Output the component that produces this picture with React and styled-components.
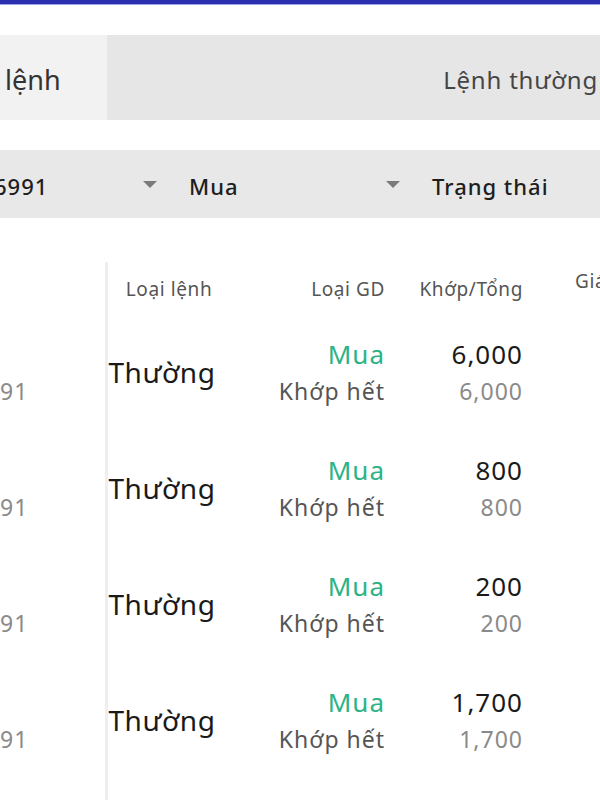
import React from 'react'
import styled, { createGlobalStyle } from 'styled-components'

const Global = createGlobalStyle`
  body {
    margin: 0;
    width: 600px;
    height: 800px;
    overflow: hidden;
    background: #fff;
    font-family: "Noto Sans", "DejaVu Sans", sans-serif;
  }
`

const Page = styled.div`
  width: 600px;
  height: 800px;
  overflow: hidden;
`

const TopBar = styled.div`
  height: 4px;
  background: #2b2fae;
  border-bottom: 1px solid #9aa6ea;
`

const Tabs = styled.div`
  display: flex;
  height: 85px;
  margin-top: 30px;
`

const Tab = styled.div`
  display: flex;
  align-items: center;
  overflow: hidden;
  white-space: nowrap;
  background: ${p => (p.$active ? '#f2f2f2' : '#e6e6e6')};
  width: ${p => (p.$active ? '107px' : 'auto')};
  flex: ${p => (p.$active ? 'none' : '1')};
  justify-content: ${p => (p.$active ? 'flex-start' : 'flex-end')};
  padding: 3px 0 0 ${p => (p.$active ? '5px' : '0')};
  box-sizing: border-box;
  font-size: ${p => (p.$active ? '27px' : '24px')};
  letter-spacing: ${p => (p.$active ? '0' : '0.8px')};
  color: ${p => (p.$active ? '#333' : '#454545')};
`

const TabLabel = styled.span`
  margin-right: ${p => p.$shift || '0'};
`

const Filters = styled.div`
  display: grid;
  grid-template-columns: 170px 240px 1fr;
  height: 68px;
  margin-top: 30px;
  background: #e8e8e8;
  overflow: hidden;
`

const Select = styled.div`
  display: flex;
  align-items: center;
  justify-content: space-between;
  padding: 4px ${p => p.$right || '0'} 0 ${p => p.$left || '0'};
  font-size: 22px;
  font-weight: 500;
  letter-spacing: 1px;
  color: #1e1e1e;
  white-space: nowrap;
`

const SelectText = styled.span`
  margin-left: ${p => p.$shift || '0'};
`

const Caret = styled.span`
  width: 0;
  height: 0;
  border-left: 7px solid transparent;
  border-right: 7px solid transparent;
  border-top: 7px solid #7a7a7a;
  margin-top: -4px;
`

const Table = styled.div`
  display: grid;
  grid-template-columns: 105px 125px 155px 138px 1fr;
  margin-top: 44px;
`

const Head = styled.div`
  height: 53px;
  display: flex;
  align-items: center;
  font-size: 19px;
  letter-spacing: 0.6px;
  color: #555;
  white-space: nowrap;
  justify-content: ${p => p.$align || 'flex-start'};
  padding-left: ${p => p.$pad || '0'};
  border-left: ${p => (p.$divider ? '3px solid #eeeeee' : 'none')};
  ${p => p.$raised && 'align-items: flex-start; padding-top: 6px; box-sizing: border-box;'}
`

const Cell = styled.div`
  height: 116px;
  display: flex;
  flex-direction: column;
  justify-content: center;
  align-items: ${p => p.$align || 'flex-start'};
  border-left: ${p => (p.$divider ? '3px solid #eeeeee' : 'none')};
  white-space: nowrap;
`

const Kind = styled.span`
  font-size: 28px;
  letter-spacing: 0.6px;
  color: #1a1a1a;
  margin: -2px 0 0 -14px;
`

const Primary = styled.span`
  font-size: 26px;
  line-height: 37px;
  letter-spacing: 1px;
  color: ${p => (p.$buy ? '#2bb386' : '#1a1a1a')};
`

const Secondary = styled.span`
  font-size: 23px;
  line-height: 37px;
  letter-spacing: 1px;
  color: ${p => (p.$muted ? '#8a8a8a' : '#555')};
`

const rows = [
  { total: '6,000' },
  { total: '800' },
  { total: '200' },
  { total: '1,700' },
  { total: '500' },
]

export default function App() {
  return (
    <Page>
      <Global />
      <TopBar />
      <Tabs>
        <Tab $active>lệnh</Tab>
        <Tab>
          <TabLabel $shift="2px">Lệnh thường</TabLabel>
        </Tab>
      </Tabs>
      <Filters>
        <Select $right="13px">
          <SelectText $shift="-6px">6991</SelectText>
          <Caret />
        </Select>
        <Select $left="19px" $right="10px">
          <SelectText>Mua</SelectText>
          <Caret />
        </Select>
        <Select $left="22px">
          <SelectText>Trạng thái</SelectText>
        </Select>
      </Filters>
      <Table>
        <Head />
        <Head $divider $align="center">Loại lệnh</Head>
        <Head $align="flex-end">Loại GD</Head>
        <Head $align="flex-end">Khớp/Tổng</Head>
        <Head $pad="52px" $raised>Giá</Head>
        {rows.map((r, i) => (
          <React.Fragment key={i}>
            <Cell>
              <Primary>&nbsp;</Primary>
              <Secondary $muted>91</Secondary>
            </Cell>
            <Cell $divider $align="center">
              <Kind>Thường</Kind>
            </Cell>
            <Cell $align="flex-end">
              <Primary $buy>Mua</Primary>
              <Secondary>Khớp hết</Secondary>
            </Cell>
            <Cell $align="flex-end">
              <Primary>{r.total}</Primary>
              <Secondary $muted>{r.total}</Secondary>
            </Cell>
            <Cell />
          </React.Fragment>
        ))}
      </Table>
    </Page>
  )
}
